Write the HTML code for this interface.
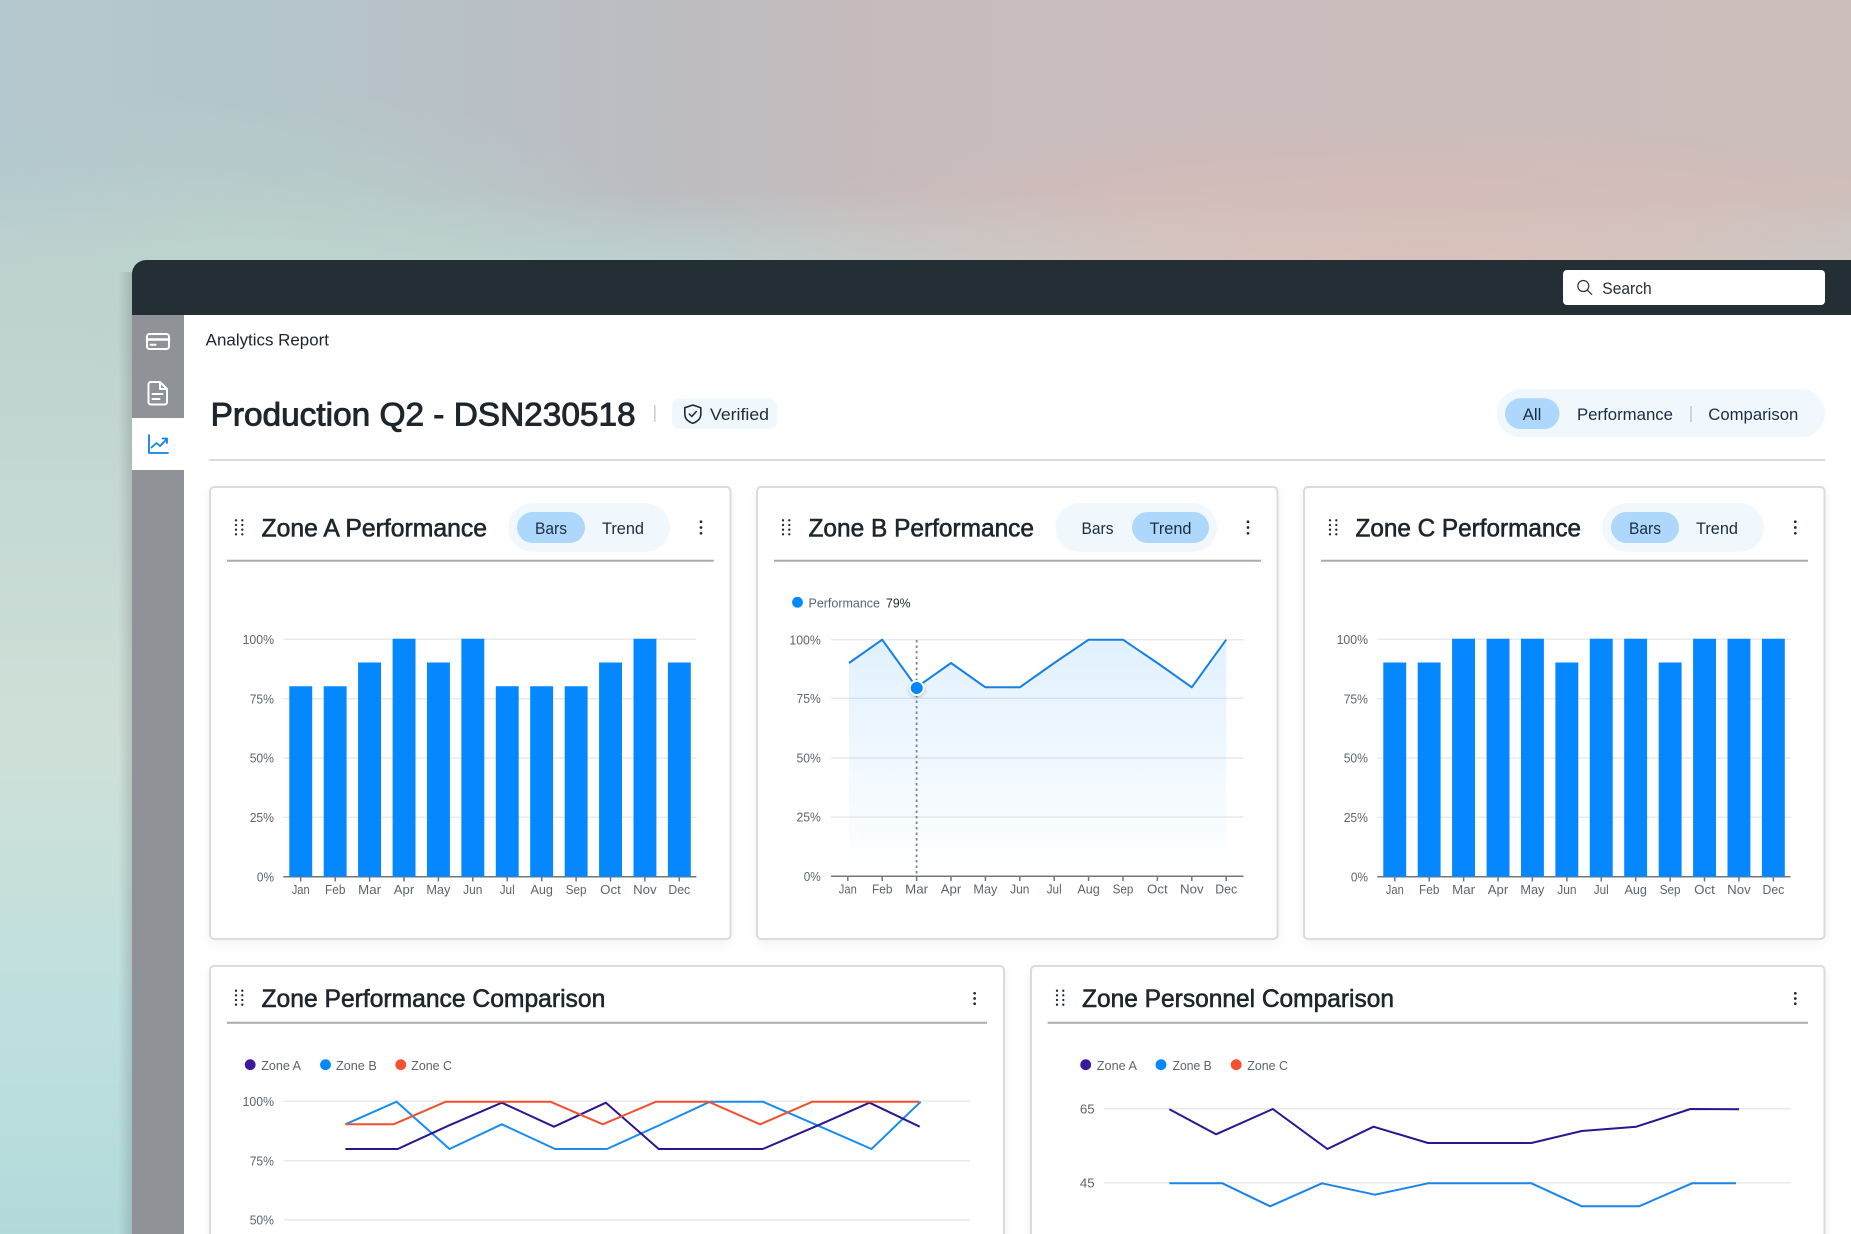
<!DOCTYPE html>
<html lang="en"><head><meta charset="utf-8"><title>Analytics Report</title>
<style>
html,body{margin:0;padding:0;width:1851px;height:1234px;overflow:hidden}
body{position:relative;background:
radial-gradient(ellipse 760px 185px at 1420px 300px,rgba(229,187,178,.95),rgba(229,187,178,0) 100%),
radial-gradient(ellipse 420px 180px at 260px 270px,rgba(188,212,204,.8),rgba(188,212,204,0) 100%),
linear-gradient(180deg,rgba(189,208,208,0) 190px,#bdd0d0 262px,#c6d8d4 500px,#cfe0d8 740px,#bfe0df 1000px,#b3dadb 1234px),
linear-gradient(90deg,#b4c9cf 0%,#b4c5ca 14%,#bbbdc2 34%,#c5bbbd 46%,#cabcbc 62%,#cbbebb 100%)}
svg{position:absolute;left:0;top:0;display:block}
text{font-family:"Liberation Sans",sans-serif}
.t{font-size:25px;fill:#1c262c;stroke:#1c262c;stroke-width:.6}
.s{font-size:17px;fill:#1b2c45}
.m{font-size:13px;fill:#5c656c}
.g{stroke:#e8eaec;stroke-width:1.5;fill:none}
.ax{stroke:#70767b;stroke-width:1.5;fill:none}
.u{stroke:#a8acaf;stroke-width:2}
.c{fill:#fff;stroke:#d9dbdc;stroke-width:2;filter:url(#sh)}
.d{fill:#1f2a30}
.k{fill:#1c262c}
.b{fill:#0487ff}
.p{fill:#f0f7fd}
.a{fill:#aed8fb}
</style></head><body>
<svg width="1851" height="1234" viewBox="0 0 1851 1234" xmlns="http://www.w3.org/2000/svg">
<defs>
<filter id="sh" x="-5%" y="-5%" width="110%" height="115%"><feDropShadow dx="0" dy="3" stdDeviation="5" flood-color="#000" flood-opacity=".06"/></filter>
<filter id="ds" x="-50%" y="-50%" width="200%" height="200%"><feDropShadow dx="0" dy="1" stdDeviation="1.5" flood-color="#000" flood-opacity=".25"/></filter>
<linearGradient id="ar" x1="0" y1="0" x2="0" y2="1"><stop offset="0" stop-color="#0787ff" stop-opacity=".12"/><stop offset="1" stop-color="#0787ff" stop-opacity="0"/></linearGradient>
<linearGradient id="ws" x1="0" y1="0" x2="1" y2="0"><stop offset="0" stop-color="#000" stop-opacity="0"/><stop offset="1" stop-color="#000" stop-opacity=".13"/></linearGradient>
</defs>

<!-- window -->
<rect x="118" y="272" width="14" height="962" fill="url(#ws)"/>
<path d="M132 1234V274a14 14 0 0 1 14-14H1851V1234z" fill="#fff"/>
<path d="M132 315V274a14 14 0 0 1 14-14H1851V315z" fill="#242e35"/>
<rect x="132" y="315" width="52" height="919" fill="#8f9296"/>
<rect x="132" y="418" width="52" height="52" fill="#fff"/>

<!-- sidebar icons -->
<g fill="none" stroke="#fff" stroke-width="2" stroke-linecap="round" stroke-linejoin="round">
<rect x="147" y="334" width="22" height="15" rx="2.5"/>
<path d="M147 339.5h22" stroke-width="2.6"/>
<path d="M150.500 344.800h5"/>
<path d="M151 382h9l7 7v13a2.500 2.500 0 0 1-2.500 2.500h-13.500a2.500 2.500 0 0 1-2.500-2.500v-17.500a2.500 2.500 0 0 1 2.500-2.500zM160 382v7h7M152.500 394h10M152.500 399h7"/>
</g>
<g fill="none" stroke="#1083e6" stroke-width="1.800" stroke-linecap="round" stroke-linejoin="round">
<path d="M149 435v18h19"/>
<path d="M151.500 447.500l5-4.500 3.500 3 7-7M162.500 438.500h4.500v4.500"/>
</g>

<!-- search -->
<rect x="1563" y="270" width="262" height="35" rx="4" fill="#fff"/>
<circle cx="1583.300" cy="286" r="5.500" fill="none" stroke="#2a3238" stroke-width="1.200"/>
<path d="M1587.500 290.300l4.300 4.200" stroke="#2a3238" stroke-width="1.200" stroke-linecap="round"/>
<text x="1602.300" y="294" font-size="17" fill="#242e35" textLength="49.400" lengthAdjust="spacingAndGlyphs">Search</text>

<!-- header -->
<text x="205.700" y="345.500" font-size="16.500" fill="#1c262c" textLength="123.300" lengthAdjust="spacingAndGlyphs">Analytics Report</text>
<text x="210.600" y="425.700" font-size="32" fill="#1c262c" stroke="#1c262c" stroke-width=".9" textLength="425" lengthAdjust="spacingAndGlyphs">Production Q2 - DSN230518</text>
<path d="M654.800 405v17" stroke="#c9cccf" stroke-width="1.500"/>
<rect x="672" y="398.300" width="105" height="30.700" rx="8" class="p"/>
<path d="M692.800 405L700.800 407.800V414C700.800 418.800 697 421.800 692.800 423.300C688.600 421.800 684.800 418.800 684.800 414V407.800Z" fill="none" stroke="#1f2a30" stroke-width="1.600" stroke-linejoin="round"/>
<path d="M689.300 414l2.500 2.500l4.500-5" fill="none" stroke="#1f2a30" stroke-width="1.500" stroke-linecap="round" stroke-linejoin="round"/>
<text x="710" y="420" font-size="17" fill="#242e35" textLength="59" lengthAdjust="spacingAndGlyphs">Verified</text>

<rect x="1496.700" y="389.300" width="328.300" height="48" rx="24" class="p"/>
<rect x="1505" y="398.300" width="54.500" height="30.700" rx="15.300" class="a"/>
<text x="1522.700" y="420" class="s" textLength="18.700" lengthAdjust="spacingAndGlyphs">All</text>
<text x="1577" y="420" class="s" textLength="96" lengthAdjust="spacingAndGlyphs">Performance</text>
<path d="M1691 406v16" stroke="#c2c8cd" stroke-width="1.500"/>
<text x="1708.300" y="420" class="s" textLength="90" lengthAdjust="spacingAndGlyphs">Comparison</text>
<path d="M209 460H1825" stroke="#d9dbdc" stroke-width="2"/>

<!-- ============ CARD A ============ -->
<rect x="210" y="487" width="520.500" height="452" rx="4" class="c"/>
<g class="d"><circle cx="236" cy="520.300" r="1.150"/><circle cx="242.300" cy="520.300" r="1.150"/><circle cx="236" cy="525" r="1.150"/><circle cx="242.300" cy="525" r="1.150"/><circle cx="236" cy="529.700" r="1.150"/><circle cx="242.300" cy="529.700" r="1.150"/><circle cx="236" cy="534.300" r="1.150"/><circle cx="242.300" cy="534.300" r="1.150"/></g>
<text x="261.500" y="536.700" class="t" textLength="225.500" lengthAdjust="spacingAndGlyphs">Zone A Performance</text>
<rect x="508.400" y="503.300" width="161.600" height="48.400" rx="24.200" class="p"/>
<rect x="517" y="512" width="68" height="31" rx="15.500" class="a"/>
<text x="535" y="533.800" class="s" textLength="32" lengthAdjust="spacingAndGlyphs">Bars</text>
<text x="602" y="533.800" class="s" textLength="42" lengthAdjust="spacingAndGlyphs">Trend</text>
<g class="k"><circle cx="701" cy="521.700" r="1.350"/><circle cx="701" cy="527.500" r="1.350"/><circle cx="701" cy="533.300" r="1.350"/></g>
<path d="M227 560.700H713.800" class="u"/>
<path d="M283.200 639.300H696.400M283.200 698.700H696.400M283.200 758H696.400M283.200 817.300H696.400" class="g"/>
<path class="ax" d="M283.200 876.700H696.400M300.700 877v4.500M335.200 877v4.500M369.600 877v4.500M404 877v4.500M438.400 877v4.500M472.800 877v4.500M507.200 877v4.500M541.700 877v4.500M576.100 877v4.500M610.500 877v4.500M644.900 877v4.500M679.300 877v4.500"/>
<path class="b" d="M289.300 686.300h22.900V876.700h-22.900zM323.700 686.300h22.900V876.700h-22.900zM358.100 662.500h22.900V876.700h-22.900zM392.600 638.800h22.900V876.700h-22.900zM427 662.500h22.900V876.700h-22.900zM461.400 638.800h22.900V876.700h-22.900zM495.800 686.300h22.900V876.700h-22.900zM530.200 686.300h22.900V876.700h-22.900zM564.700 686.300h22.900V876.700h-22.900zM599.100 662.500h22.900V876.700h-22.900zM633.500 638.800h22.900V876.700h-22.900zM667.900 662.500h22.900V876.700h-22.900z"/>
<g class="m" text-anchor="end">
<text x="274" y="644" textLength="31.400" lengthAdjust="spacingAndGlyphs">100%</text>
<text x="274" y="703.400" textLength="24.300" lengthAdjust="spacingAndGlyphs">75%</text>
<text x="274" y="762.700" textLength="24.300" lengthAdjust="spacingAndGlyphs">50%</text>
<text x="274" y="822" textLength="24.300" lengthAdjust="spacingAndGlyphs">25%</text>
<text x="274" y="881.400" textLength="17.100" lengthAdjust="spacingAndGlyphs">0%</text>
</g>
<g class="m" text-anchor="middle">
<text x="300.700" y="894" textLength="18" lengthAdjust="spacingAndGlyphs">Jan</text>
<text x="335.200" y="894" textLength="20.400" lengthAdjust="spacingAndGlyphs">Feb</text>
<text x="369.600" y="894" textLength="22.900" lengthAdjust="spacingAndGlyphs">Mar</text>
<text x="404" y="894" textLength="20.400" lengthAdjust="spacingAndGlyphs">Apr</text>
<text x="438.400" y="894" textLength="24" lengthAdjust="spacingAndGlyphs">May</text>
<text x="472.800" y="894" textLength="19.300" lengthAdjust="spacingAndGlyphs">Jun</text>
<text x="507.200" y="894" textLength="15" lengthAdjust="spacingAndGlyphs">Jul</text>
<text x="541.700" y="894" textLength="22.500" lengthAdjust="spacingAndGlyphs">Aug</text>
<text x="576.100" y="894" textLength="20.700" lengthAdjust="spacingAndGlyphs">Sep</text>
<text x="610.500" y="894" textLength="20.700" lengthAdjust="spacingAndGlyphs">Oct</text>
<text x="644.900" y="894" textLength="23.600" lengthAdjust="spacingAndGlyphs">Nov</text>
<text x="679.300" y="894" textLength="21.800" lengthAdjust="spacingAndGlyphs">Dec</text>
</g>

<!-- ============ CARD B ============ -->
<rect x="757" y="487" width="520.500" height="452" rx="4" class="c"/>
<g class="d"><circle cx="783" cy="520.300" r="1.150"/><circle cx="789.300" cy="520.300" r="1.150"/><circle cx="783" cy="525" r="1.150"/><circle cx="789.300" cy="525" r="1.150"/><circle cx="783" cy="529.700" r="1.150"/><circle cx="789.300" cy="529.700" r="1.150"/><circle cx="783" cy="534.300" r="1.150"/><circle cx="789.300" cy="534.300" r="1.150"/></g>
<text x="808.500" y="536.700" class="t" textLength="225.500" lengthAdjust="spacingAndGlyphs">Zone B Performance</text>
<rect x="1055.400" y="503.300" width="161.600" height="48.400" rx="24.200" class="p"/>
<rect x="1132" y="512" width="77" height="31" rx="15.500" class="a"/>
<text x="1081.500" y="533.800" class="s" textLength="32" lengthAdjust="spacingAndGlyphs">Bars</text>
<text x="1149.500" y="533.800" class="s" textLength="42" lengthAdjust="spacingAndGlyphs">Trend</text>
<g class="k"><circle cx="1248" cy="521.700" r="1.350"/><circle cx="1248" cy="527.500" r="1.350"/><circle cx="1248" cy="533.300" r="1.350"/></g>
<path d="M774 560.700H1261" class="u"/>
<circle cx="797.500" cy="602.300" r="5.400" class="b"/>
<text x="808.500" y="607.700" class="m" textLength="71.500" lengthAdjust="spacingAndGlyphs">Performance</text>
<text x="886" y="607.700" font-size="13" fill="#1c262c" textLength="24.600" lengthAdjust="spacingAndGlyphs">79%</text>
<path d="M831 639.700H1243.500M831 698.300H1243.500M831 758H1243.500M831 817H1243.500" class="g"/>
<path fill="url(#ar)" d="M849 876.300V663L882.200 639.700L916.600 687.300L951 663L985.400 687.300L1019.800 687.300L1054.200 663L1088.600 639.700L1123 639.700L1157.400 663L1191.800 687.300L1226.200 639.700V876.300Z"/>
<path class="ax" d="M831 876.300H1243.500M847.800 876.500v4.500M882.200 876.500v4.500M916.600 876.500v4.500M951 876.500v4.500M985.400 876.500v4.500M1019.800 876.500v4.500M1054.200 876.500v4.500M1088.600 876.500v4.500M1123 876.500v4.500M1157.400 876.500v4.500M1191.800 876.500v4.500M1226.200 876.500v4.500"/>
<path d="M916.600 640V876" stroke="#80868b" stroke-width="1.800" stroke-dasharray="2.500 3" fill="none"/>
<path fill="none" stroke="#1580e4" stroke-width="2" stroke-linejoin="round" d="M849 663L882.200 639.700L916.600 687.300L951 663L985.400 687.300L1019.800 687.300L1054.200 663L1088.600 639.700L1123 639.700L1157.400 663L1191.800 687.300L1226.200 639.700"/>
<circle cx="916.700" cy="688" r="7" class="b" stroke="#fff" stroke-width="2" filter="url(#ds)"/>
<g class="m" text-anchor="end">
<text x="820.800" y="644.400" textLength="31.400" lengthAdjust="spacingAndGlyphs">100%</text>
<text x="820.800" y="703" textLength="24.300" lengthAdjust="spacingAndGlyphs">75%</text>
<text x="820.800" y="762.700" textLength="24.300" lengthAdjust="spacingAndGlyphs">50%</text>
<text x="820.800" y="821.700" textLength="24.300" lengthAdjust="spacingAndGlyphs">25%</text>
<text x="820.800" y="881" textLength="17.100" lengthAdjust="spacingAndGlyphs">0%</text>
</g>
<g class="m" text-anchor="middle">
<text x="847.800" y="893.700" textLength="18" lengthAdjust="spacingAndGlyphs">Jan</text>
<text x="882.200" y="893.700" textLength="20.400" lengthAdjust="spacingAndGlyphs">Feb</text>
<text x="916.600" y="893.700" textLength="22.900" lengthAdjust="spacingAndGlyphs">Mar</text>
<text x="951" y="893.700" textLength="20.400" lengthAdjust="spacingAndGlyphs">Apr</text>
<text x="985.400" y="893.700" textLength="24" lengthAdjust="spacingAndGlyphs">May</text>
<text x="1019.800" y="893.700" textLength="19.300" lengthAdjust="spacingAndGlyphs">Jun</text>
<text x="1054.200" y="893.700" textLength="15" lengthAdjust="spacingAndGlyphs">Jul</text>
<text x="1088.600" y="893.700" textLength="22.500" lengthAdjust="spacingAndGlyphs">Aug</text>
<text x="1123" y="893.700" textLength="20.700" lengthAdjust="spacingAndGlyphs">Sep</text>
<text x="1157.400" y="893.700" textLength="20.700" lengthAdjust="spacingAndGlyphs">Oct</text>
<text x="1191.800" y="893.700" textLength="23.600" lengthAdjust="spacingAndGlyphs">Nov</text>
<text x="1226.200" y="893.700" textLength="21.800" lengthAdjust="spacingAndGlyphs">Dec</text>
</g>

<!-- ============ CARD C ============ -->
<rect x="1304" y="487" width="520.500" height="452" rx="4" class="c"/>
<g class="d"><circle cx="1330" cy="520.300" r="1.150"/><circle cx="1336.300" cy="520.300" r="1.150"/><circle cx="1330" cy="525" r="1.150"/><circle cx="1336.300" cy="525" r="1.150"/><circle cx="1330" cy="529.700" r="1.150"/><circle cx="1336.300" cy="529.700" r="1.150"/><circle cx="1330" cy="534.300" r="1.150"/><circle cx="1336.300" cy="534.300" r="1.150"/></g>
<text x="1355.500" y="536.700" class="t" textLength="225.500" lengthAdjust="spacingAndGlyphs">Zone C Performance</text>
<rect x="1602.400" y="503.300" width="161.600" height="48.400" rx="24.200" class="p"/>
<rect x="1611" y="512" width="68" height="31" rx="15.500" class="a"/>
<text x="1629" y="533.800" class="s" textLength="32" lengthAdjust="spacingAndGlyphs">Bars</text>
<text x="1696" y="533.800" class="s" textLength="42" lengthAdjust="spacingAndGlyphs">Trend</text>
<g class="k"><circle cx="1795.300" cy="521.700" r="1.350"/><circle cx="1795.300" cy="527.500" r="1.350"/><circle cx="1795.300" cy="533.300" r="1.350"/></g>
<path d="M1321 560.700H1808" class="u"/>
<path d="M1377.200 639.300H1790.400M1377.200 698.700H1790.400M1377.200 758H1790.400M1377.200 817.300H1790.400" class="g"/>
<path class="ax" d="M1377.200 876.700H1790.400M1394.800 877v4.500M1429.200 877v4.500M1463.600 877v4.500M1498 877v4.500M1532.400 877v4.500M1566.900 877v4.500M1601.300 877v4.500M1635.700 877v4.500M1670.100 877v4.500M1704.500 877v4.500M1739 877v4.500M1773.400 877v4.500"/>
<path class="b" d="M1383.300 662.500h22.900V876.700h-22.900zM1417.700 662.500h22.900V876.700h-22.900zM1452.100 638.800h22.900V876.700h-22.900zM1486.600 638.800h22.900V876.700h-22.900zM1521 638.800h22.900V876.700h-22.900zM1555.400 662.500h22.900V876.700h-22.900zM1589.800 638.800h22.900V876.700h-22.900zM1624.200 638.800h22.900V876.700h-22.900zM1658.700 662.500h22.900V876.700h-22.900zM1693.100 638.800h22.900V876.700h-22.900zM1727.500 638.800h22.900V876.700h-22.900zM1761.900 638.800h22.900V876.700h-22.900z"/>
<g class="m" text-anchor="end">
<text x="1368" y="644" textLength="31.400" lengthAdjust="spacingAndGlyphs">100%</text>
<text x="1368" y="703.400" textLength="24.300" lengthAdjust="spacingAndGlyphs">75%</text>
<text x="1368" y="762.700" textLength="24.300" lengthAdjust="spacingAndGlyphs">50%</text>
<text x="1368" y="822" textLength="24.300" lengthAdjust="spacingAndGlyphs">25%</text>
<text x="1368" y="881.400" textLength="17.100" lengthAdjust="spacingAndGlyphs">0%</text>
</g>
<g class="m" text-anchor="middle">
<text x="1394.800" y="894" textLength="18" lengthAdjust="spacingAndGlyphs">Jan</text>
<text x="1429.200" y="894" textLength="20.400" lengthAdjust="spacingAndGlyphs">Feb</text>
<text x="1463.600" y="894" textLength="22.900" lengthAdjust="spacingAndGlyphs">Mar</text>
<text x="1498" y="894" textLength="20.400" lengthAdjust="spacingAndGlyphs">Apr</text>
<text x="1532.400" y="894" textLength="24" lengthAdjust="spacingAndGlyphs">May</text>
<text x="1566.900" y="894" textLength="19.300" lengthAdjust="spacingAndGlyphs">Jun</text>
<text x="1601.300" y="894" textLength="15" lengthAdjust="spacingAndGlyphs">Jul</text>
<text x="1635.700" y="894" textLength="22.500" lengthAdjust="spacingAndGlyphs">Aug</text>
<text x="1670.100" y="894" textLength="20.700" lengthAdjust="spacingAndGlyphs">Sep</text>
<text x="1704.500" y="894" textLength="20.700" lengthAdjust="spacingAndGlyphs">Oct</text>
<text x="1739" y="894" textLength="23.600" lengthAdjust="spacingAndGlyphs">Nov</text>
<text x="1773.400" y="894" textLength="21.800" lengthAdjust="spacingAndGlyphs">Dec</text>
</g>

<!-- ============ COMPARISON ============ -->
<rect x="210" y="966" width="794" height="300" rx="4" class="c"/>
<g class="d"><circle cx="236" cy="990.700" r="1.150"/><circle cx="242.300" cy="990.700" r="1.150"/><circle cx="236" cy="995.300" r="1.150"/><circle cx="242.300" cy="995.300" r="1.150"/><circle cx="236" cy="1000" r="1.150"/><circle cx="242.300" cy="1000" r="1.150"/><circle cx="236" cy="1004.700" r="1.150"/><circle cx="242.300" cy="1004.700" r="1.150"/></g>
<text x="261.500" y="1007" class="t" textLength="343.800" lengthAdjust="spacingAndGlyphs">Zone Performance Comparison</text>
<g class="k"><circle cx="974.600" cy="993.300" r="1.350"/><circle cx="974.600" cy="998.500" r="1.350"/><circle cx="974.600" cy="1003.700" r="1.350"/></g>
<path d="M227 1022.700H987" class="u"/>
<circle cx="250.200" cy="1064.700" r="5.400" fill="#3a1a9c"/>
<text x="261.200" y="1070" class="m" textLength="39.800" lengthAdjust="spacingAndGlyphs">Zone A</text>
<circle cx="325.500" cy="1064.700" r="5.400" class="b"/>
<text x="336" y="1070" class="m" textLength="40.800" lengthAdjust="spacingAndGlyphs">Zone B</text>
<circle cx="400.800" cy="1064.700" r="5.400" fill="#f4512c"/>
<text x="411.300" y="1070" class="m" textLength="40.700" lengthAdjust="spacingAndGlyphs">Zone C</text>
<path d="M283.700 1101.300H970M283.700 1160.700H970M283.700 1219.700H970" class="g"/>
<g class="m" text-anchor="end">
<text x="274" y="1106" textLength="31.400" lengthAdjust="spacingAndGlyphs">100%</text>
<text x="274" y="1165.400" textLength="24.300" lengthAdjust="spacingAndGlyphs">75%</text>
<text x="274" y="1224.400" textLength="24.300" lengthAdjust="spacingAndGlyphs">50%</text>
</g>
<g fill="none" stroke-width="2" stroke-linejoin="round">
<path stroke="#1a8cf0" d="M345.400 1124.300L396.600 1101.700L449.500 1149L501.800 1124.300L555.100 1149L606.900 1149L658.700 1125.500L710 1101.700L762.800 1101.700L815 1124.300L871.500 1149L920.700 1101.700"/>
<path stroke="#2f1490" d="M345.400 1149L397.700 1149L448.400 1125.700L501.800 1102.700L554 1126.700L605.900 1102.700L658.700 1149L711 1149L762.800 1149L815 1126.700L869.500 1102.700L919.700 1126.700"/>
<path stroke="#ee5230" d="M345.400 1124.300L393.500 1124.300L445.800 1101.700L498.100 1101.700L550.400 1101.700L602.700 1124.300L656 1101.700L708.400 1101.700L760.100 1124.300L812.400 1101.700L865.300 1101.700L919.200 1101.700"/>
</g>

<!-- ============ PERSONNEL ============ -->
<rect x="1031" y="966" width="793.500" height="300" rx="4" class="c"/>
<g class="d"><circle cx="1057" cy="990.700" r="1.150"/><circle cx="1063.300" cy="990.700" r="1.150"/><circle cx="1057" cy="995.300" r="1.150"/><circle cx="1063.300" cy="995.300" r="1.150"/><circle cx="1057" cy="1000" r="1.150"/><circle cx="1063.300" cy="1000" r="1.150"/><circle cx="1057" cy="1004.700" r="1.150"/><circle cx="1063.300" cy="1004.700" r="1.150"/></g>
<text x="1082" y="1007" class="t" textLength="312" lengthAdjust="spacingAndGlyphs">Zone Personnel Comparison</text>
<g class="k"><circle cx="1795.300" cy="993.300" r="1.350"/><circle cx="1795.300" cy="998.500" r="1.350"/><circle cx="1795.300" cy="1003.700" r="1.350"/></g>
<path d="M1047.600 1022.700H1808" class="u"/>
<circle cx="1085.700" cy="1064.700" r="5.400" fill="#3a1a9c"/>
<text x="1096.800" y="1070" class="m" textLength="40.200" lengthAdjust="spacingAndGlyphs">Zone A</text>
<circle cx="1161" cy="1064.700" r="5.400" class="b"/>
<text x="1172.600" y="1070" class="m" textLength="39.200" lengthAdjust="spacingAndGlyphs">Zone B</text>
<circle cx="1236.200" cy="1064.700" r="5.400" fill="#f4512c"/>
<text x="1247.300" y="1070" class="m" textLength="40.700" lengthAdjust="spacingAndGlyphs">Zone C</text>
<path d="M1103.700 1108.700H1791M1103.700 1182.700H1791" class="g"/>
<g class="m" text-anchor="end">
<text x="1094.700" y="1113.400" textLength="14.800" lengthAdjust="spacingAndGlyphs">65</text>
<text x="1094.700" y="1187.400" textLength="14.800" lengthAdjust="spacingAndGlyphs">45</text>
</g>
<g fill="none" stroke-width="2" stroke-linejoin="round">
<path stroke="#2f1490" d="M1169.400 1109.300L1216 1134.300L1272.800 1109L1327.400 1149L1373.500 1126.700L1428 1143L1531.400 1143L1581.700 1131L1636.300 1126.700L1690.400 1109L1739.100 1109.300"/>
<path stroke="#1a84ec" d="M1169.400 1183.300L1222.400 1183.300L1270.100 1206.300L1322 1183.300L1375 1194.700L1428 1183.300L1531.400 1183.300L1581.700 1206.300L1639 1206.300L1692 1183.300L1736 1183.300"/>
</g>
</svg>
</body></html>
